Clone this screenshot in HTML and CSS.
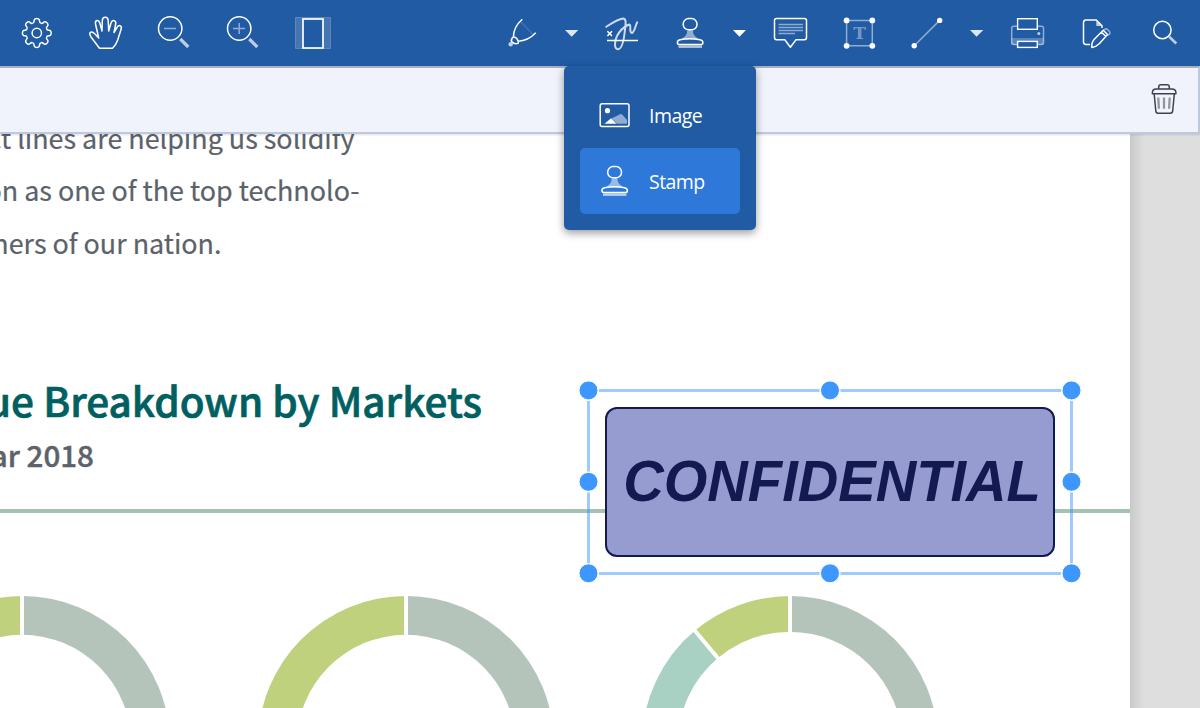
FILE: index.html
```html
<!DOCTYPE html>
<html lang="en">
<head>
<meta charset="utf-8">
<title>Document viewer</title>
<link rel="stylesheet" href="styles.css">
</head>
<body>
<div class="viewer">
  <header class="toolbar">
    <div class="tools">
      <svg class="tool" viewBox="2 0 69 66"><defs><path id="tooth" d="M-4.1-9.9C-2.3-10.2-2.9-12-2.5-13.2Q-2-14.4 0-14.4Q2-14.4 2.5-13.2C2.9-12 2.3-10.2 4.1-9.9"/></defs>
        <g transform="translate(36.8 33)"><use href="#tooth"/><use href="#tooth" transform="rotate(45)"/><use href="#tooth" transform="rotate(90)"/><use href="#tooth" transform="rotate(135)"/><use href="#tooth" transform="rotate(180)"/><use href="#tooth" transform="rotate(225)"/><use href="#tooth" transform="rotate(270)"/><use href="#tooth" transform="rotate(315)"/><circle r="4.7"/></g></svg>
      <svg class="tool" viewBox="71 0 69 66"><path d="M99.5 48.3L91 37Q89 33.5 90.3 32.4Q92 31 95 34L98.7 38L95.5 24Q95 21 97 20.6Q99 20.3 99.8 23L102 31L102.3 20.5Q102.5 17.3 105.3 17.3Q108 17.3 108.2 20.5L108.7 31L111 23Q112 20 114 20.6Q116.3 21.3 115.7 24L114 32.5L117 27.5Q118.5 24.8 120.4 25.8Q122 26.8 121 29.5L117.7 40Q116 45 112.5 48.3Z"/></svg>
      <svg class="tool" viewBox="140 0 69 66"><circle cx="170.2" cy="28.5" r="11.7"/><path class="half" d="M164 28.5H176"/><path class="handle" d="M180.3 39L188.3 47"/></svg>
      <svg class="tool" viewBox="209 0 69 66"><circle cx="239.2" cy="28.5" r="11.7"/><path class="half" d="M233 28.5H245M239.2 23V34"/><path class="handle" d="M249.3 39L257.3 47"/></svg>
      <svg class="tool" viewBox="278 0 69 66"><rect class="backing" x="295.5" y="17.5" width="35" height="31"/><rect class="sheet" x="303" y="19" width="20" height="29"/></svg>
    </div>
    <div class="tools">
      <svg class="tool" viewBox="488 0 69 66"><path d="M522.3 19.2Q513.5 27 513.4 36.7Q510.5 39.5 511.5 41.5Q514.8 45 518.3 43.2Q518.5 41.6 518 41.2Q528 41 535.8 32.8M513.4 36.7Q517.3 37.5 518 41.2"/><path class="faint" d="M521 22L532.5 34"/><circle class="soft-fill" cx="510.7" cy="44.2" r="2.2"/></svg>
      <svg class="arrow dim" viewBox="557 0 31 66"><path d="M565 30H578.3L571.7 36.7Z"/></svg>
      <svg class="tool" viewBox="588 0 69 66"><path d="M607 40.5H638M607.4 31.3L612 36M612 31.3L607.4 36"/><path class="ink" d="M606.2 26.8C612 23 618 19 623 18.5C627 18.5 625.5 25 624.8 31C624 39 622 49 618 49.3C614 49.6 614.3 41 617 36C619.5 31 624 27 628 25C630 24 630.5 25 630.3 28C630 31 630.7 33.2 632.2 33C635 31 635.5 25 637.2 22.3"/></svg>
      <svg class="tool narrow" viewBox="657 0 67 66"><g id="stamp"><rect x="683.2" y="18.6" width="13.8" height="11.2" rx="5.4"/><path class="neck" d="M687.2 30.3H693Q692.5 36 699 39.3H681Q687.7 36 687.2 30.3Z"/><path d="M679 44.4Q677.4 44.4 677.4 42.5Q677.4 40.4 680 39.8Q690 37.9 700 39.8Q702.9 40.4 702.9 42.5Q702.9 44.4 701.3 44.4Z"/><path class="under" d="M678.5 46.6H702"/></g></svg>
      <svg class="arrow wide" viewBox="724 0 32 66"><path d="M733 30H746L739.5 36.7Z"/></svg>
      <svg class="tool" viewBox="756 0 69 66"><path d="M776.5 18.5H804.5Q806.5 18.5 806.5 20.5V37.5Q806.5 39.7 804.5 39.7H796L790.4 47.2L784.8 39.7H776.5Q774.5 39.7 774.5 37.5V20.5Q774.5 18.5 776.5 18.5Z"/><path class="half" d="M778.5 24.4H803M778.5 27.5H803M778.5 30.6H803M778.5 33.5H795"/></svg>
      <svg class="tool mid" viewBox="825 0 68 66"><rect class="half" x="846.6" y="20.4" width="25.7" height="25.4"/><g class="dots"><circle cx="846.6" cy="20.4" r="2.9"/><circle cx="872.3" cy="20.4" r="2.9"/><circle cx="846.6" cy="45.8" r="2.9"/><circle cx="872.3" cy="45.8" r="2.9"/></g><text class="letter" x="859.5" y="39.3">T</text></svg>
      <svg class="tool" viewBox="893 0 69 66"><path class="half" d="M914.2 45.8L939.7 20.4"/><g class="dots"><circle cx="914.2" cy="45.8" r="2.7"/><circle cx="939.7" cy="20.4" r="2.7"/></g></svg>
      <svg class="arrow dim" viewBox="962 0 31 66"><path d="M970 30H983.3L976.6 36.7Z"/></svg>
      <svg class="tool" viewBox="993 0 69 66"><path class="soft-fill low" d="M1011.5 38H1043.5V44.5H1011.5Z"/><rect class="half" x="1011.7" y="26.2" width="31.8" height="18.4" rx="2"/><rect class="sheet fine" x="1017.6" y="18.7" width="19.7" height="10.6"/><rect class="sheet fine" x="1017.6" y="41.4" width="19.7" height="6"/><circle class="soft-fill" cx="1038.8" cy="33.5" r="1.5"/></svg>
      <svg class="tool" viewBox="1062 0 69 66"><path d="M1090 44.4H1086Q1083.5 44.4 1083.5 42V22.5Q1083.5 20 1086 20H1096.3L1102 25.8V28"/><path class="soft-fill" d="M1096.3 20.5V26H1102Z"/><path d="M1091.8 47.5Q1091.3 42.5 1094.5 39L1103.3 30.3L1107.5 34.5L1099.5 43.5Q1096 47 1091.8 47.5ZM1101.5 32L1105.8 36.5"/><path class="half" d="M1103.3 30.3L1105 29.1Q1106.5 28.4 1108 30L1109.7 31.8Q1110.5 33 1109.4 34.1L1107.6 35.5"/></svg>
      <svg class="tool" viewBox="1131 0 69 66"><circle cx="1162.4" cy="30" r="8.7"/><path class="handle slim" d="M1169.2 36.7L1176.3 43.5"/></svg>
    </div>
  </header>

  <div class="options">
    <svg class="trash" viewBox="1148 80 32 38"><path d="M1158.7 88.7V87Q1158.7 84.8 1161 84.8H1167Q1169.3 84.8 1169.3 87V88.7M1152.4 93.8V92.5Q1152.6 89 1156 89H1172Q1175.6 89 1175.9 92.5V93.8ZM1154.2 94.2L1155.8 110.8Q1156 113.3 1158 113.3H1170.3Q1172.5 113.3 1172.7 110.8L1174.3 94.2"/><path class="slats" d="M1158.3 97.5L1158.9 108.8M1164 97.5V108.8M1169.7 97.5L1169.1 108.8"/></svg>
  </div>

  <main class="workspace">
    <article class="paper">
      <div class="copy">
        <p class="first">ct lines are helping us solidify</p>
        <p>on as one of the top technolo-</p>
        <p class="third">ners of our nation.</p>
      </div>
      <h1>ue Breakdown by Markets</h1>
      <h2>ar 2018</h2>
      <hr>
      <svg class="charts" viewBox="0 580 1130 128">
        <g class="sage"><path d="M22 596A148 148 0 0 1 170 744H131.2A109.2 109.2 0 0 0 22 634.8Z"/><path d="M406 596A148 148 0 0 1 554 744H515.2A109.2 109.2 0 0 0 406 634.8Z"/><path d="M790 596A148 148 0 0 1 938 744H902.1A112.1 112.1 0 0 0 790 631.9Z"/></g>
        <g class="lime"><path d="M22 596A148 148 0 0 0-126 744H-87.2A109.2 109.2 0 0 1 22 634.8Z"/><path d="M406 596A148 148 0 0 0 258 744H296.8A109.2 109.2 0 0 1 406 634.8Z"/><path d="M790 596A148 148 0 0 0 694.9 630.6L717.9 658.1A112.1 112.1 0 0 1 790 631.9Z"/></g>
        <path class="mint" d="M694.9 630.6A148 148 0 0 0 642 744H677.9A112.1 112.1 0 0 1 717.9 658.1Z"/>
        <path class="gaps" d="M22 590V640M406 590V640M790 590V640M691 626L722 663"/>
      </svg>
    </article>
  </main>

  <div class="annotation">
    <div class="stamp"><span>CONFIDENTIAL</span></div>
    <svg class="selection" viewBox="576 378 508 208"><path class="frame" d="M599 390.5H819.5M840.5 390.5H1061M599 573.5H819.5M840.5 573.5H1061M588.5 401V471.5M588.5 492.5V563M1071.5 401V471.5M1071.5 492.5V563"/><g class="grips"><circle cx="588.5" cy="390.4" r="9.5"/><circle cx="830" cy="390.4" r="9.5"/><circle cx="1071.5" cy="390.4" r="9.5"/><circle cx="588.5" cy="481.8" r="9.5"/><circle cx="1071.5" cy="481.8" r="9.5"/><circle cx="588.5" cy="573.3" r="9.5"/><circle cx="830" cy="573.3" r="9.5"/><circle cx="1071.5" cy="573.3" r="9.5"/></g></svg>
  </div>

  <nav class="menu">
    <a class="item"><svg viewBox="597 97 36 36"><rect x="600.2" y="103.8" width="28.8" height="22.8" rx="2"/><circle class="solid" cx="607.5" cy="110.7" r="2.6"/><path class="solid" d="M604.5 123.8L611 118.3L616.5 123.8Z"/><path class="hill" d="M611.5 118.5L620 114.2Q621.5 113.7 623 115.5L627 120V123.8H617Z"/></svg><span>Image</span></a>
    <a class="item active"><svg viewBox="672.5 15 36 36"><use href="#stamp"/></svg><span>Stamp</span></a>
  </nav>
</div>
</body>
</html>
```
FILE: styles.css
```css
* { box-sizing: border-box; }
body { margin: 0; }
.viewer { position: relative; display: flex; flex-direction: column; width: 1200px; height: 708px; overflow: hidden; background: #dedede; }

.toolbar { flex: none; display: flex; justify-content: space-between; height: 66px; padding-left: 2px; background: #205ba3; }
.tools { display: flex; }
svg { display: block; fill: none; stroke: #fff; stroke-width: 1.5; stroke-linejoin: round; }
.tool { width: 69px; height: 66px; }
.narrow { width: 67px; }
.mid { width: 68px; }
.arrow { width: 31px; height: 66px; fill: #fff; stroke: none; }
.arrow.wide { width: 32px; }
.dim { opacity: .85; }
.half { stroke-opacity: .5; }
.faint { stroke-opacity: .15; }
.handle { stroke-opacity: .7; stroke-width: 3.2; }
.slim { stroke-width: 2.6; }
.backing { fill: rgba(255,255,255,.17); stroke: rgba(255,255,255,.2); stroke-width: 1; }
.sheet { fill: #205ba3; stroke-width: 1.7; stroke-linejoin: miter; }
.fine { stroke-width: 1.4; }
.soft-fill { fill: rgba(255,255,255,.72); stroke: none; }
.low { fill-opacity: .35; }
.ink { stroke-width: 2; stroke-opacity: .78; stroke-linecap: round; }
.neck { fill: rgba(255,255,255,.5); stroke: none; }
.under { stroke-width: 2.6; stroke-opacity: .65; }
.dots { fill: #fff; stroke: none; }
.letter { fill: rgba(255,255,255,.4); stroke: none; font: bold 17px "DejaVu Serif", serif; text-anchor: middle; }

.options { flex: none; display: flex; align-items: center; justify-content: flex-end; height: 68px; padding: 0 18px 2px 0; background: #f0f3fb; border-top: 2px solid #a9b0bc; border-right: 2px solid #bdcadd; border-bottom: 2px solid #bdcadd; z-index: 1; box-shadow: 0 1px 2px rgba(0,0,0,.12); }
.trash { width: 32px; height: 38px; stroke: #40404f; stroke-width: 1.5; }
.slats { stroke: #9495a0; stroke-width: 2.3; }

.workspace { flex: 1; background: linear-gradient(90deg, transparent 1130px, #c9c9c9 1130px, #dedede 1144px); }
.paper { display: flow-root; width: 1130px; height: 574px; background: #fff; overflow: hidden; font-family: "Noto Sans CJK JP", sans-serif; color: #5b626a; white-space: nowrap; }
.copy { display: flex; flex-direction: column; align-items: flex-end; width: 359.5px; height: 208px; margin-top: -22.3px; font-size: 26.9px; line-height: 52.5px; -webkit-text-stroke: .2px #5b626a; }
.copy p { margin: 0; }
.copy .first { margin-right: 5px; }
.copy .third { margin-right: 138px; }
h1, h2 { display: flex; justify-content: flex-end; margin: 0; }
h1 { width: 482px; height: 60px; margin-top: 50px; font-size: 40.5px; line-height: 60px; font-weight: 500; color: #005f61; -webkit-text-stroke: .7px #005f61; }
h2 { width: 94px; height: 44px; margin-top: 3.3px; font-size: 29.6px; line-height: 44px; font-weight: 500; -webkit-text-stroke: .4px #5b626a; }
hr { height: 4px; margin: 32px 0 0; border: 0; background: #a5c3b0; }
.charts { width: 1130px; height: 128px; margin-top: 67px; stroke: none; }
.sage { fill: #b4c4ba; }
.lime { fill: #c0d17d; }
.mint { fill: #a9d1c3; }
.gaps { stroke: #fff; stroke-width: 4; }

.annotation { position: absolute; left: 576px; top: 378px; width: 508px; height: 208px; padding: 29px; }
.stamp { display: flex; align-items: center; justify-content: center; width: 450px; height: 150px; padding: 0 0 3px 4px; border: 2px solid #131951; border-radius: 12px; background: #969bd0; color: #131951; font: italic bold 56.1px "Liberation Sans", Arial, sans-serif; }
.stamp span { transform: scaleY(1.03); }
.selection { position: absolute; inset: 0; width: 508px; height: 208px; }
.frame { stroke: rgba(61,149,255,.5); stroke-width: 3; }
.grips { fill: #3d97ff; stroke: #fff; stroke-width: 1; }

.menu { position: absolute; left: 564px; top: 66px; z-index: 2; width: 192px; height: 164px; padding: 16px; border-radius: 5px; background: #205ba3; box-shadow: 0 3px 9px rgba(0,0,0,.4); color: #fff; font: 19.5px "Open Sans", sans-serif; }
.item { display: flex; align-items: center; gap: 16px; height: 66px; padding-left: 17px; border-radius: 5px; letter-spacing: -.55px; }
.item span { padding-top: 1px; }
.item svg { width: 36px; height: 36px; }
.active { background: #2d78d8; }
.solid { fill: #fff; stroke: none; }
.hill { fill: rgba(255,255,255,.5); stroke: none; }
```
